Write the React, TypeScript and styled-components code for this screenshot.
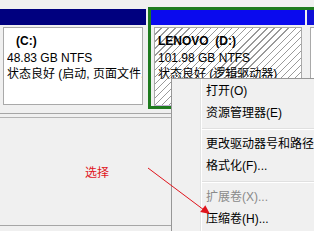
import styled, { createGlobalStyle } from "styled-components";

const GlobalStyle = createGlobalStyle`
  html, body {
    margin: 0;
    padding: 0;
    background: #f0f0f0;
  }
  body {
    font-family: "Liberation Sans", "Noto Sans CJK SC", sans-serif;
    font-size: 12px;
    color: #000;
  }
`;

const Screen = styled.div`
  position: relative;
  width: 314px;
  height: 231px;
  overflow: hidden;
  background: #f0f0f0;
`;

const TopStrip = styled.div`
  height: 7px;
  background: #f0f0f0;
`;

const DiskRow = styled.div`
  display: flex;
  gap: 2px;
  height: 102px;
`;

const Partition = styled.div<{ $width?: number }>`
  display: flex;
  flex-direction: column;
  flex: ${(p) => (p.$width ? `0 0 ${p.$width}px` : "1 1 auto")};
  min-width: 0;
`;

const Bar = styled.div<{ $color: string; $top?: number; $h: number }>`
  height: ${(p) => p.$h}px;
  margin-top: ${(p) => p.$top ?? 0}px;
  background: ${(p) => p.$color};
  flex-shrink: 0;
`;

const Body = styled.div<{ $hatched?: boolean; $bottom?: number }>`
  flex: 1;
  margin: 2px 3px ${(p) => p.$bottom ?? 0}px 3px;
  padding: 5px 0 0 3px;
  border: 1px solid #a9a9a9;
  border-bottom-color: ${(p) => (p.$hatched ? "#c3b3d6" : "#a9a9a9")};
  background: ${(p) =>
    p.$hatched
      ? "repeating-linear-gradient(135deg, #ffffff 0 4px, #9a9a9a 4px 5px)"
      : "#ffffff"};
  overflow: hidden;
`;

const TextLine = styled.div<{ $bold?: boolean; $indent?: number }>`
  height: 16.5px;
  line-height: 16.5px;
  white-space: pre;
  overflow: hidden;
  font-weight: ${(p) => (p.$bold ? 700 : 400)};
  padding-left: ${(p) => p.$indent ?? 0}px;
`;

const ExtendedFrame = styled.div`
  flex: 0 0 200px;
  display: flex;
  gap: 2px;
  border: 3px solid #1e7b1e;
  box-sizing: border-box;
`;

const LowerArea = styled.div`
  padding-top: 3px;
`;

const Rule = styled.div<{ $gap?: number; $color?: string }>`
  height: 1px;
  margin-top: ${(p) => p.$gap ?? 0}px;
  background: ${(p) => p.$color ?? "#a6a6a6"};
`;

const Menu = styled.div`
  position: absolute;
  left: 171px;
  top: 78px;
  width: 190px;
  padding: 1px 0;
  border: 1px solid #979797;
  background: linear-gradient(
    to right,
    #f0f0f0 0 28px,
    #e2e3e3 28px 29px,
    #ffffff 29px 30px,
    #f0f0f0 30px
  );
`;

const MenuItem = styled.div<{ $disabled?: boolean }>`
  height: 22px;
  line-height: 22px;
  padding-left: 34px;
  white-space: nowrap;
  color: ${(p) => (p.$disabled ? "#8a8a8a" : "#000")};
`;

const MenuSeparator = styled.div`
  height: 9px;
  margin-left: 30px;
  display: flex;
  flex-direction: column;
  justify-content: center;
  &::before {
    content: "";
    height: 1px;
    background: #e0e0e0;
  }
  &::after {
    content: "";
    height: 1px;
    background: #ffffff;
  }
`;

const Note = styled.div`
  position: absolute;
  left: 85px;
  top: 165px;
  color: #e0141c;
  font-size: 12px;
  line-height: 16px;
`;

const Overlay = styled.svg`
  position: absolute;
  left: 0;
  top: 0;
  pointer-events: none;
`;

export default function App() {
  return (
    <>
      <GlobalStyle />
      <Screen>
        <TopStrip />
        <DiskRow>
          <Partition $width={146}>
            <Bar $color="#00007f" $top={2} $h={16} />
            <Body $bottom={4}>
              <TextLine $bold $indent={9}>(C:)</TextLine>
              <TextLine>48.83 GB NTFS</TextLine>
              <TextLine>状态良好 (启动, 页面文件, 故障转储, 主分区)</TextLine>
            </Body>
          </Partition>
          <ExtendedFrame>
            <Partition $width={154}>
              <Bar $color="#0a0aee" $h={15} />
              <Body $hatched>
                <TextLine $bold>LENOVO  (D:)</TextLine>
                <TextLine>101.98 GB NTFS</TextLine>
                <TextLine>状态良好 (逻辑驱动器)</TextLine>
              </Body>
            </Partition>
            <Partition>
              <Bar $color="#1010d8" $h={15} />
              <Body />
            </Partition>
          </ExtendedFrame>
        </DiskRow>
        <LowerArea>
          <Rule $gap={1} />
          <Rule $gap={3} $color="#b4b4b4" />
          <Rule $gap={107} />
        </LowerArea>

        <Note>选择</Note>

        <Menu>
          <MenuItem>打开(O)</MenuItem>
          <MenuItem>资源管理器(E)</MenuItem>
          <MenuSeparator />
          <MenuItem>更改驱动器号和路径(C)...</MenuItem>
          <MenuItem>格式化(F)...</MenuItem>
          <MenuSeparator />
          <MenuItem $disabled>扩展卷(X)...</MenuItem>
          <MenuItem>压缩卷(H)...</MenuItem>
        </Menu>

        <Overlay width={314} height={231} viewBox="0 0 314 231">
          <line x1="148" y1="168" x2="204" y2="210" stroke="#e0141c" strokeWidth="1" />
          <polygon points="210,214 200.2,211.9 205.3,205.2" fill="#e0141c" />
        </Overlay>
      </Screen>
    </>
  );
}
